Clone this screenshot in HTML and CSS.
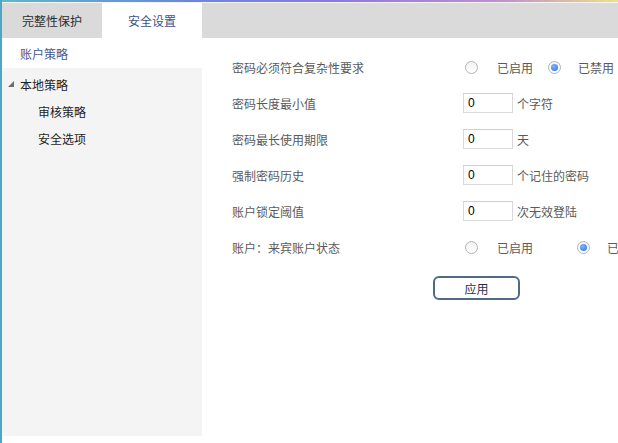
FILE: index.html
```html
<!DOCTYPE html>
<html lang="zh-CN">
<head>
<meta charset="utf-8">
<title>安全设置</title>
<link rel="stylesheet" href="styles.css">
</head>
<body>
<div class="window">
  <div class="accent"></div>
  <div class="tabs">
    <div class="tab">完整性保护</div>
    <div class="tab tab-active">安全设置</div>
  </div>
  <div class="main">
    <aside class="sidebar">
      <div class="side-head">账户策略</div>
      <div class="tree">
        <div class="tree-row tree-parent">
          <svg class="caret" width="6" height="6" viewBox="0 0 6 6"><polygon points="6,0 6,6 0,6" fill="#6e6e6e"/></svg>
          <span>本地策略</span>
        </div>
        <div class="tree-row tree-child">审核策略</div>
        <div class="tree-row tree-child">安全选项</div>
      </div>
    </aside>
    <section class="content">
      <div class="row">
        <div class="label">密码必须符合复杂性要求</div>
        <div class="ctrl">
          <label class="opt opt-narrow"><span class="radio"></span><span class="opt-text">已启用</span></label>
          <label class="opt"><span class="radio radio-on"></span><span class="opt-text opt-text-tight">已禁用</span></label>
        </div>
      </div>
      <div class="row">
        <div class="label">密码长度最小值</div>
        <div class="ctrl"><div class="field">0</div><span class="unit">个字符</span></div>
      </div>
      <div class="row">
        <div class="label">密码最长使用期限</div>
        <div class="ctrl"><div class="field">0</div><span class="unit">天</span></div>
      </div>
      <div class="row">
        <div class="label">强制密码历史</div>
        <div class="ctrl"><div class="field">0</div><span class="unit">个记住的密码</span></div>
      </div>
      <div class="row">
        <div class="label">账户锁定阈值</div>
        <div class="ctrl"><div class="field">0</div><span class="unit">次无效登陆</span></div>
      </div>
      <div class="row">
        <div class="label">账户：来宾账户状态</div>
        <div class="ctrl">
          <label class="opt opt-wide"><span class="radio"></span><span class="opt-text">已启用</span></label>
          <label class="opt"><span class="radio radio-on"></span><span class="opt-text opt-text-tight">已禁用</span></label>
        </div>
      </div>
      <div class="actions">
        <button class="btn">应用</button>
      </div>
    </section>
  </div>
</div>
</body>
</html>
```
FILE: styles.css
```css
* { box-sizing: border-box; }
html, body { margin: 0; padding: 0; }
body {
  width: 618px;
  height: 443px;
  overflow: hidden;
  background: #ffffff;
  font-family: "Noto Sans CJK SC", "Microsoft YaHei", sans-serif;
  font-size: 12px;
  color: #555;
}
.window {
  height: 443px;
  border-left: 2px solid #4ea6c2;
  display: flex;
  flex-direction: column;
}
.accent {
  height: 3px;
  flex-shrink: 0;
  background: linear-gradient(90deg, #5cb8c6 0%, #6c86dc 30%, #8c78e0 55%, #c292c8 82%, #efe08a 100%);
  border-bottom: 1px solid #f4f4f4;
}
.tabs {
  height: 35px;
  flex-shrink: 0;
  background: #dadada;
  display: flex;
}
.tab {
  width: 100px;
  display: flex;
  align-items: center;
  justify-content: center;
  color: #2e2e2e;
  font-size: 12px;
}
.tab-active {
  background: #ffffff;
  color: #3d5183;
}
.main {
  flex: 1;
  display: flex;
  min-height: 0;
}
.sidebar {
  width: 200px;
  flex-shrink: 0;
  display: flex;
  flex-direction: column;
}
.side-head {
  height: 30px;
  display: flex;
  align-items: center;
  padding-left: 18px;
  color: #44598c;
  background: #fff;
}
.tree {
  height: 368px;
  background: #f4f4f4;
  padding-top: 3px;
}
.tree-row {
  height: 27px;
  display: flex;
  align-items: center;
  color: #1e1e1e;
}
.tree-parent { padding-left: 6px; }
.caret { margin-right: 6px; margin-top: -2px; }
.tree-child { padding-left: 36px; }
.content {
  flex: 1;
  min-width: 0;
  overflow: hidden;
  padding-top: 11px;
  padding-left: 30px;
}
.row {
  height: 36px;
  display: flex;
  align-items: center;
}
.label {
  width: 231px;
  flex-shrink: 0;
  color: #5a5a5a;
}
.ctrl {
  display: flex;
  align-items: center;
  white-space: nowrap;
  flex-shrink: 0;
}
.opt {
  display: flex;
  align-items: center;
  margin-left: 2px;
  flex-shrink: 0;
}
.opt + .opt { margin-left: 0; }
.opt-narrow { width: 83px; }
.opt-wide { width: 112px; }
.opt-text { margin-left: 19px; color: #5a5a5a; }
.opt-text-tight { margin-left: 17px; }
.radio {
  width: 13px;
  height: 13px;
  flex-shrink: 0;
  border-radius: 50%;
  border: 1px solid #b4b4b4;
  background: linear-gradient(180deg, #f2f2f2, #ffffff);
  display: flex;
  align-items: center;
  justify-content: center;
}
.radio-on::after {
  content: "";
  width: 7px;
  height: 7px;
  border-radius: 50%;
  background: radial-gradient(circle at 40% 35%, #7fb4ff, #2e6fe0);
}
.field {
  width: 50px;
  height: 20px;
  flex-shrink: 0;
  border: 1px solid #d9d9d9;
  border-top-color: #cfcfcf;
  padding-left: 4px;
  display: flex;
  align-items: center;
  color: #000;
  font-family: "Liberation Sans", Arial, sans-serif;
  font-size: 12px;
}
.unit {
  margin-left: 4px;
  color: #5a5a5a;
}
.actions {
  padding-top: 11px;
  padding-left: 201px;
}
.btn {
  width: 87px;
  height: 24px;
  border: 2px solid #4f6a88;
  border-radius: 6px;
  background: #ffffff;
  color: #1f3350;
  font-family: "Noto Sans CJK SC", sans-serif;
  font-size: 12px;
  padding: 0;
}
```
